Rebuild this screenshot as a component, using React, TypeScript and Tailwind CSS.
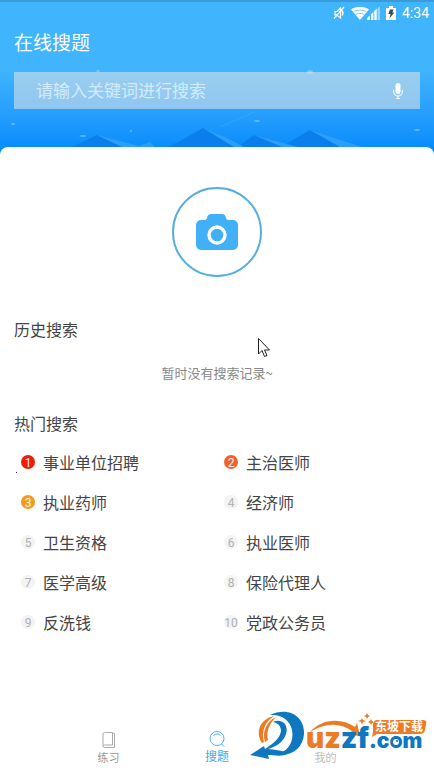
import { useState } from 'react';

const hotSearches = [
  { rank: 1, label: '事业单位招聘' },
  { rank: 2, label: '主治医师' },
  { rank: 3, label: '执业药师' },
  { rank: 4, label: '经济师' },
  { rank: 5, label: '卫生资格' },
  { rank: 6, label: '执业医师' },
  { rank: 7, label: '医学高级' },
  { rank: 8, label: '保险代理人' },
  { rank: 9, label: '反洗钱' },
  { rank: 10, label: '党政公务员' },
];

const badgeStyles: Record<number, string> = {
  1: 'bg-[#f01c0c] text-white/90',
  2: 'bg-[#f0622d] text-white/90',
  3: 'bg-[#f5991c] text-white/90',
};

function StatusBar() {
  return (
    <div className="relative flex h-6 items-center justify-end border-t-2 border-[#3a9bd8] pr-[5px] text-white">
      <svg width="12" height="16" viewBox="0 0 12 16" fill="none" stroke="currentColor" className="mr-[6px]">
        <path d="M2 6.5h2L7.5 3v10L4 10H2z" strokeWidth="1.2" />
        <path d="M9 5.5c1.2 1.5 1.2 3.5 0 5M1 13.5L11 2" strokeWidth="1.3" />
      </svg>
      <svg width="31" height="16" viewBox="0 0 31 16" fill="currentColor" className="mr-[4px]">
        <path d="M0 4.5C5 .8 13 .8 18 4.5L9 15z" />
        <path d="M2.5 6.8c4-2.4 9-2.4 13 0M4.8 9.4c2.6-1.4 5.8-1.4 8.4 0" fill="none" stroke="#42b3fb" strokeWidth=".7" />
        <path d="M16 15v-2l3-2.6V15zM20 15V9.2l2.4-2.4V15zM23.3 15V6l2.4-2.4V15z" />
        <path d="M26.5 15V3l2.5-2v14z" opacity=".45" />
      </svg>
      <svg width="10" height="16" viewBox="0 0 10 16" className="mr-[6px]">
        <path d="M3 1h4v2h3v12H0V3h3z" fill="currentColor" />
        <path d="M4 4.5h3.6L6.3 7.5h2L3.5 13.5l1-4.5H2.3z" fill="#3d4b57" />
      </svg>
      <span className="font-[Roboto] text-sm leading-4">4:34</span>
    </div>
  );
}

// Sky and mountains behind the title and the search box
function HeaderScenery() {
  return (
    <svg
      className="absolute inset-0 h-full w-full"
      viewBox="0 0 434 155"
      preserveAspectRatio="none"
      aria-hidden="true"
    >
      <g fill="#0a7eec">
        <path d="M72 147l25-12 25 12z" />
        <path d="M168 147l16-8 19-11 38 19z" />
        <path d="M238 147l16-12 37 12z" />
        <path d="M281 147l29-17 37 17z" />
      </g>
      <g fill="#2c9ffa">
        <path d="M97 135l42 11 11-4 5 5h-33z" />
        <path d="M203 128l24 10 17 9h-10z" />
        <path d="M254 135l44 12h-16z" />
        <path d="M310 130l52 17h-22z" />
      </g>
      <g fill="#7cc8f5">
        <ellipse cx="98" cy="71" rx="2" ry="1" />
        <ellipse cx="310" cy="72" rx="3" ry="2" />
        <ellipse cx="257" cy="121" rx="3" ry="1" opacity=".7" />
        <ellipse cx="417" cy="130" rx="3" ry="1" opacity=".7" />
        <ellipse cx="83" cy="136" rx="3" ry="1" opacity=".7" />
        <ellipse cx="131" cy="131" rx="1" ry="1" opacity=".7" />
        <ellipse cx="13" cy="124" rx="2" ry="1" opacity=".7" />
      </g>
      <path d="M220 127l34-15" stroke="#4fb4fa" strokeWidth=".4" />
    </svg>
  );
}

function CameraIcon() {
  return (
    <svg width="42" height="36" viewBox="0 0 42 36" fill="#42b0f7" aria-hidden="true">
      <path d="M5 6h4c3 0 1-6 6-6h11c5 0 3 6 6 6h5a5 5 0 0 1 5 5v20a5 5 0 0 1-5 5H5a5 5 0 0 1-5-5V11a5 5 0 0 1 5-5z" />
      <circle cx="21" cy="21" r="8" fill="none" stroke="white" strokeWidth="3.4" />
    </svg>
  );
}

function MicIcon() {
  return (
    <svg width="10" height="16" viewBox="0 0 10 16" fill="none" stroke="white" aria-hidden="true">
      <rect x="2.5" y="0" width="5" height="11" rx="2.5" fill="white" stroke="none" />
      <path d="M.7 7v2c0 2.5 1.8 4 4.3 4s4.300-1.500 4.300-4V7M5 13v2M3 15.500h4" />
    </svg>
  );
}

function BookIcon() {
  return (
    <svg width="16" height="16" viewBox="0 0 16 16" fill="none" stroke="#aaa" aria-hidden="true">
      <path d="M4.500.5h7v12.500h-8c-2 0-2 2.500 0 2.500h10v-14h-2M4.500.5h-1c-1 0-1.500.5-1.500 1.500v12" />
    </svg>
  );
}

function SearchIcon() {
  return (
    <svg width="16" height="16" viewBox="0 0 16 16" fill="none" stroke="#4bb1f2" aria-hidden="true">
      <circle cx="8" cy="7.500" r="7" />
      <path d="M12.500 13l2.500 2.500M4.500 4.500c2-2 5-2 7 0" />
    </svg>
  );
}

function Watermark() {
  return (
    <svg
      className="pointer-events-none absolute right-[7px] bottom-[12px]"
      width="179"
      height="52"
      viewBox="0 0 179 52"
    >
      <g fill="#ee7a22">
        <path d="M14 34C7 23 12 10 26 7C17 13 13 22 16 33z" />
        <path d="M17 33C14 23 18 13 28 8C21 15 18 23 20 31z" />
      </g>
      <g fill="#0d78c0">
        <path d="M22 6C40-3 57 7 56 25C55 39 44 48 29 45C41 42 46 32 44 21C42 11 33 5 22 6z" />
        <path d="M25 13C34 9 41 16 38 25C35 34 27 38 20 40c9 0 16 4 24 2c-8 7-17 4-24 4l1 4L2 46l14-9 1 3C26 34 32 29 33 22C33 17 30 14 25 13z" />
      </g>
      <path d="M61 24C74 9 93 9 107 18l2-4 3 13-12-2 4-3C91 13 76 14 61 24z" fill="#ee7a22" />
      <path
        d="M114 9l1 2 3 1-3 1-1 3-1-3-3-1 3-1zM119 4l1 2 2 1-2 1-1 2-1-2-2-1 2-1zM123 10l1 2 2 1-2 1-1 2-1-2-2-1 2-1z"
        fill="#ee7a22"
      />
      <g fontFamily="Inter, 'Liberation Sans', sans-serif" fontWeight="900" fontSize="28">
        <text x="58" y="39" fill="#ee7a22">
          uz<tspan fill="#0d78c0">zf</tspan>
        </text>
        <text x="121" y="39" fontSize="21" fill="#0d78c0">.com</text>
      </g>
      <circle cx="148" cy="33" r="3" fill="white" />
      <circle cx="149" cy="32" r="1" fill="#0d78c0" />
      <path d="M129 11h46q4 0 3 4l-1 6q-1 4-5 4h-43l-5 3 1-5v-8q1-4 4-4z" fill="#ee7a22" />
      <text
        x="127"
        y="22"
        fill="white"
        fontFamily="'Noto Sans CJK SC', sans-serif"
        fontSize="12"
        fontWeight="700"
      >
        东坡下载
      </text>
    </svg>
  );
}

export default function App() {
  const [query, setQuery] = useState('');

  return (
    <div className="relative flex min-h-screen flex-col bg-white font-['Noto_Sans_CJK_SC',sans-serif] text-[#444]">
      <header className="relative bg-linear-to-b from-[#40b4fd] from-45% to-[#078dfc] to-95% pb-[46px]">
        <HeaderScenery />
        <StatusBar />
        <h1 className="relative mt-[6px] px-[14px] text-[19px] leading-6 text-white">在线搜题</h1>
        <div className="relative mx-[14px] mt-[18px] flex h-[37px] items-center bg-[#e6e6e6]/55 pr-[17px] pl-[22px]">
          <input
            type="text"
            aria-label="请输入关键词进行搜索"
            placeholder="请输入关键词进行搜索"
            value={query}
            onChange={(e) => setQuery(e.target.value)}
            className="min-w-0 flex-1 bg-transparent pb-[2px] text-[17px] leading-6 text-white outline-none placeholder:text-[#d2ebfb]"
          />
          <button type="button" aria-label="语音搜索">
            <MicIcon />
          </button>
        </div>
      </header>

      <main className="relative -mt-2 flex-1 rounded-t-lg bg-white px-[14px] pt-10">
        <button
          type="button"
          aria-label="拍照搜题"
          className="mx-auto flex size-[90px] items-center justify-center rounded-full border-2 border-[#55aee2]"
        >
          <CameraIcon />
        </button>

        <section className="mt-10">
          <h2 className="text-base leading-6">历史搜索</h2>
          <p className="mt-[22px] text-center text-[13px] leading-5 text-[#888]">暂时没有搜索记录~</p>
        </section>

        <section className="mt-7">
          <h2 className="text-base leading-6">热门搜索</h2>
          <ul className="mt-[7px] grid grid-cols-2">
            {hotSearches.map((item) => (
              <li key={item.rank}>
                <a href="#" className="flex h-10 items-center gap-2 pl-[7px] text-base">
                  <span
                    className={`flex size-[14px] items-center justify-center rounded-full pt-[2px] font-[Roboto] text-xs leading-3 ${
                      badgeStyles[item.rank] ?? 'bg-[#f3f3f3] text-[#b0b0b0]'
                    }`}
                  >
                    {item.rank}
                  </span>
                  {item.label}
                </a>
              </li>
            ))}
          </ul>
        </section>

        {/* Mouse pointer */}
        <svg className="absolute top-[191px] left-[258px]" width="13" height="20" viewBox="0 0 13 20">
          <path
            d="M.5.500v15.500l3.500-3.500 2.500 6 2.500-1-2.500-5.500h5z"
            fill="white"
            stroke="#222"
          />
        </svg>
        <span className="absolute top-[325px] left-[16px] size-px bg-[#1a1a6a]" />
      </main>

      <nav className="flex h-[46px] px-[12.5%] text-[11px] leading-4 text-[#999]">
        <a href="#" className="flex flex-1 flex-col items-center gap-px pt-[5px]">
          <BookIcon />
          练习
        </a>
        <a href="#" className="flex flex-1 flex-col items-center gap-px pt-[4px] text-xs leading-4 text-[#3fa9ee]">
          <SearchIcon />
          搜题
        </a>
        <a href="#" className="flex flex-1 flex-col items-center pt-[22px] text-[#bbb]">
          我的
        </a>
      </nav>
      <Watermark />
    </div>
  );
}
